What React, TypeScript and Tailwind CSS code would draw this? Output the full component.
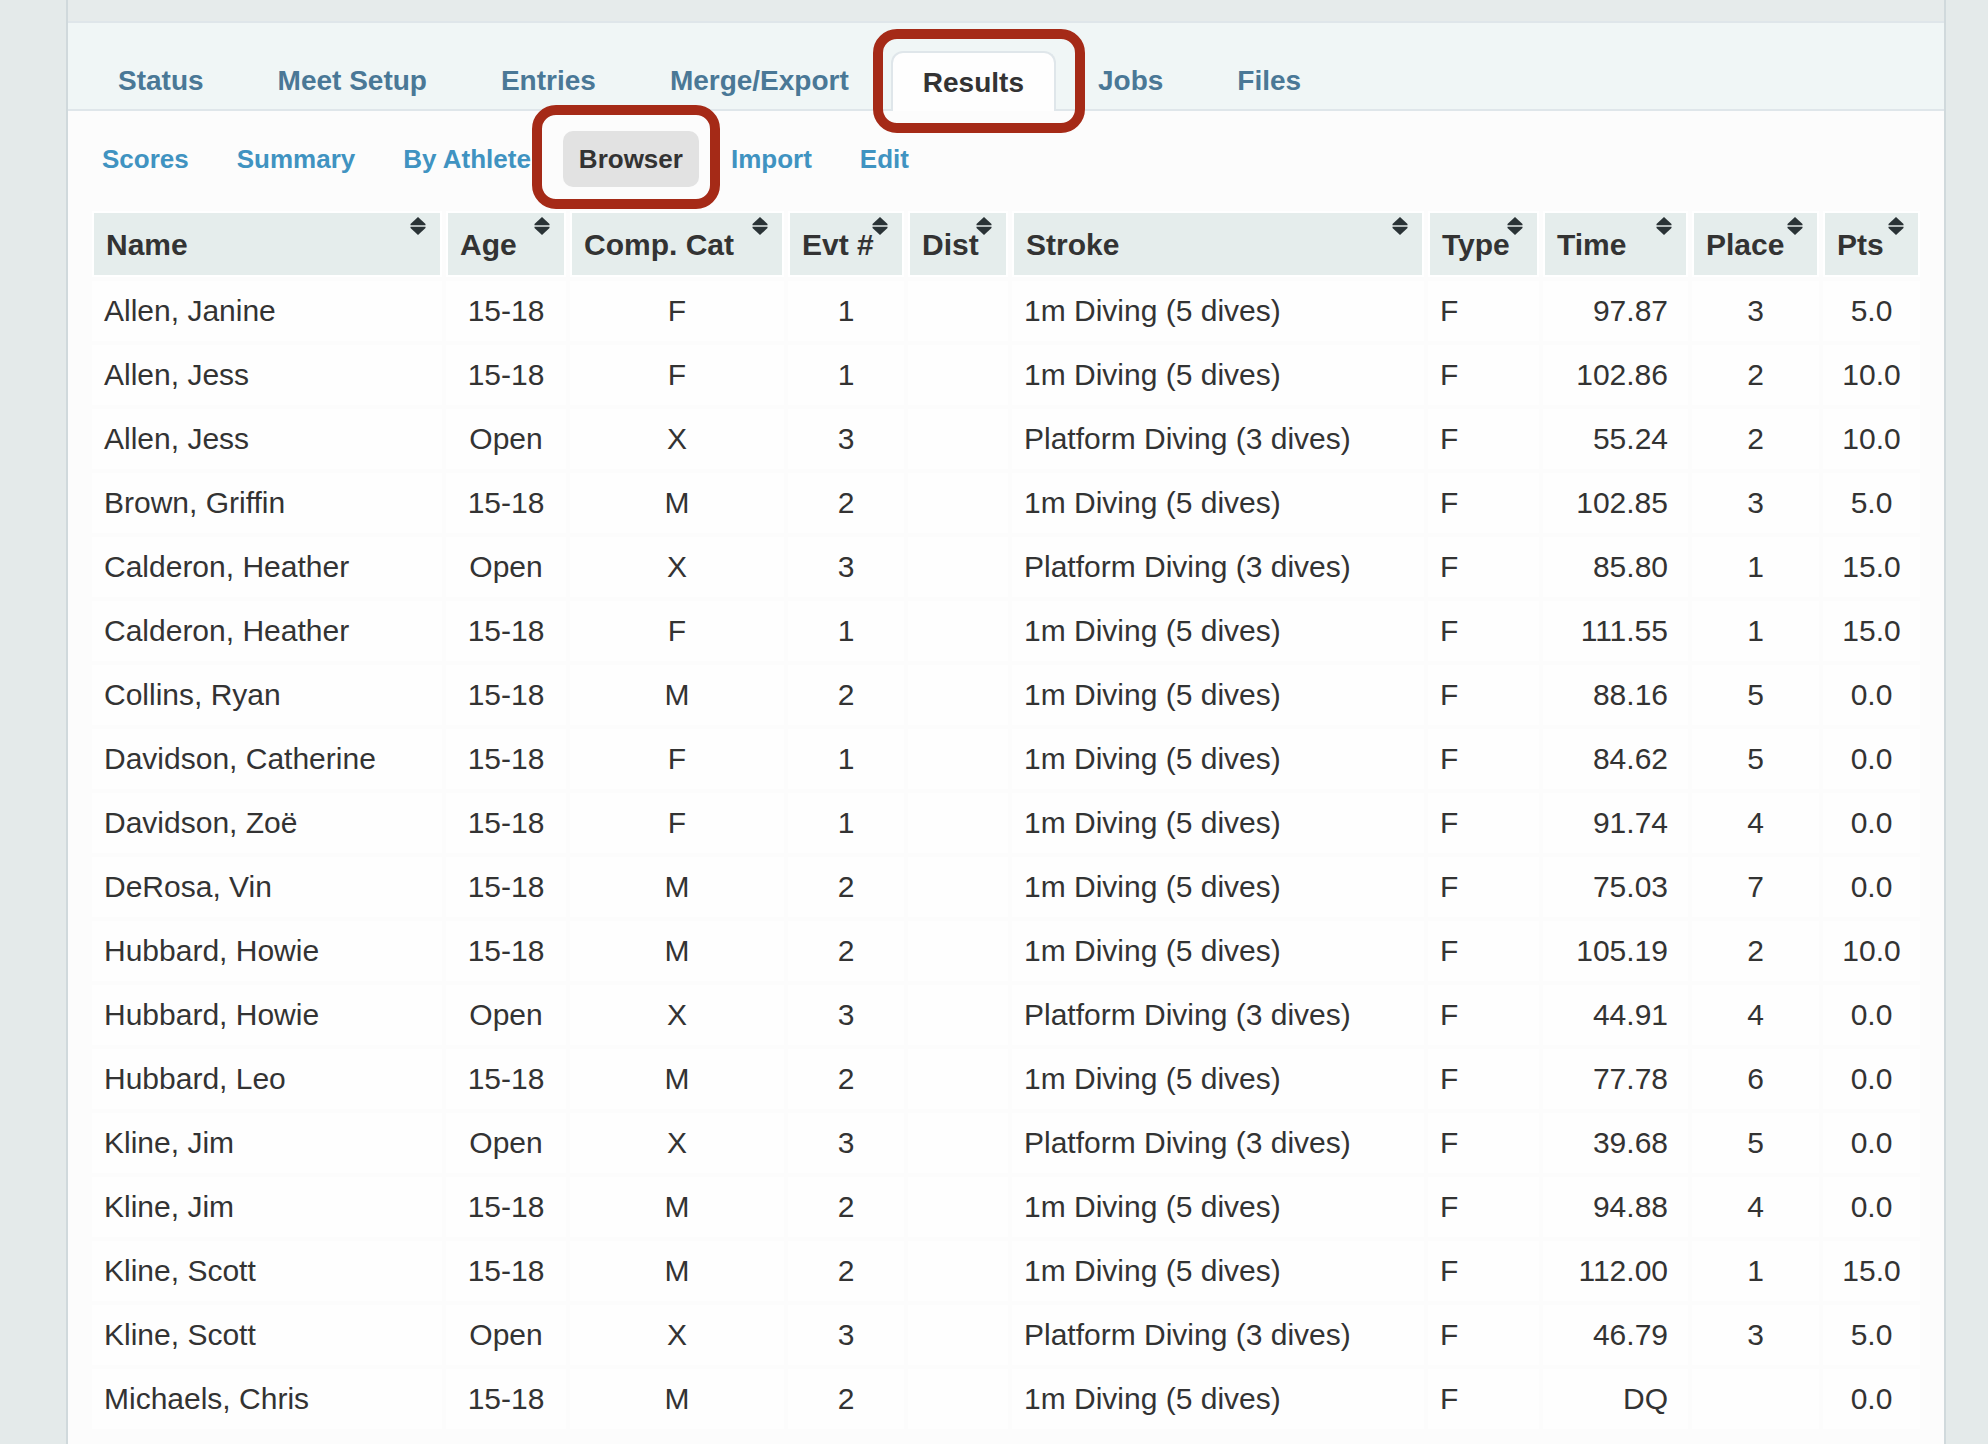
import React from 'react';

interface Column {
  label: string;
  width: string;
  cell: string;
}

const FONT = "font-['Liberation_Sans',Arial,sans-serif]";

const tabs = ['Status', 'Meet Setup', 'Entries', 'Merge/Export', 'Results', 'Jobs', 'Files'];
const subTabs = ['Scores', 'Summary', 'By Athlete', 'Browser', 'Import', 'Edit'];

const columns: Column[] = [
  { label: 'Name', width: 'w-[350px]', cell: 'px-3 text-left' },
  { label: 'Age', width: 'w-[120px]', cell: 'px-3 text-center' },
  { label: 'Comp. Cat', width: 'w-[214px]', cell: 'px-3 text-center' },
  { label: 'Evt #', width: 'w-[116px]', cell: 'px-3 text-center' },
  { label: 'Dist', width: 'w-[100px]', cell: 'px-3 text-center' },
  { label: 'Stroke', width: 'w-[412px]', cell: 'px-3 text-left' },
  { label: 'Type', width: 'w-[111px]', cell: 'px-3 text-left' },
  { label: 'Time', width: 'w-[145px]', cell: 'px-5 text-right' },
  { label: 'Place', width: 'w-[127px]', cell: 'px-3 text-center' },
  { label: 'Pts', width: 'w-[97px]', cell: 'px-3 text-center' },
];

const ONE_METER = '1m Diving (5 dives)';
const PLATFORM = 'Platform Diving (3 dives)';

// name, age, comp. cat, evt #, dist, stroke, type, time, place, pts
const rows: string[][] = [
  ['Allen, Janine', '15-18', 'F', '1', '', ONE_METER, 'F', '97.87', '3', '5.0'],
  ['Allen, Jess', '15-18', 'F', '1', '', ONE_METER, 'F', '102.86', '2', '10.0'],
  ['Allen, Jess', 'Open', 'X', '3', '', PLATFORM, 'F', '55.24', '2', '10.0'],
  ['Brown, Griffin', '15-18', 'M', '2', '', ONE_METER, 'F', '102.85', '3', '5.0'],
  ['Calderon, Heather', 'Open', 'X', '3', '', PLATFORM, 'F', '85.80', '1', '15.0'],
  ['Calderon, Heather', '15-18', 'F', '1', '', ONE_METER, 'F', '111.55', '1', '15.0'],
  ['Collins, Ryan', '15-18', 'M', '2', '', ONE_METER, 'F', '88.16', '5', '0.0'],
  ['Davidson, Catherine', '15-18', 'F', '1', '', ONE_METER, 'F', '84.62', '5', '0.0'],
  ['Davidson, Zoë', '15-18', 'F', '1', '', ONE_METER, 'F', '91.74', '4', '0.0'],
  ['DeRosa, Vin', '15-18', 'M', '2', '', ONE_METER, 'F', '75.03', '7', '0.0'],
  ['Hubbard, Howie', '15-18', 'M', '2', '', ONE_METER, 'F', '105.19', '2', '10.0'],
  ['Hubbard, Howie', 'Open', 'X', '3', '', PLATFORM, 'F', '44.91', '4', '0.0'],
  ['Hubbard, Leo', '15-18', 'M', '2', '', ONE_METER, 'F', '77.78', '6', '0.0'],
  ['Kline, Jim', 'Open', 'X', '3', '', PLATFORM, 'F', '39.68', '5', '0.0'],
  ['Kline, Jim', '15-18', 'M', '2', '', ONE_METER, 'F', '94.88', '4', '0.0'],
  ['Kline, Scott', '15-18', 'M', '2', '', ONE_METER, 'F', '112.00', '1', '15.0'],
  ['Kline, Scott', 'Open', 'X', '3', '', PLATFORM, 'F', '46.79', '3', '5.0'],
  ['Michaels, Chris', '15-18', 'M', '2', '', ONE_METER, 'F', 'DQ', '', '0.0'],
];

const SortIcon = () => (
  <svg viewBox="0 0 16 18" className="absolute top-1 right-3.5 w-4 h-[18px]" aria-hidden="true">
    <path d="M8 0 L15.5 7 V8 H0.5 V7 Z" fill="#2a3336" />
    <path d="M0.5 8 H15.5 V10 H0.5 Z" fill="#b3baba" />
    <path d="M0.5 10 H15.5 V11 L8 18 L0.5 11 Z" fill="#2a3336" />
  </svg>
);

// Red callout ring laid over the active item
const Callout = ({ className }: { className: string }) => (
  <span className={`absolute z-10 border-[10px] border-[#a52a17] rounded-3xl pointer-events-none ${className}`} />
);

const MainTabs = () => (
  <nav className="flex items-end gap-2.5 h-[88px] pl-[18px] bg-[#f0f6f6] border-b-2 border-[#dfe6ea]">
    {tabs.map((tab) =>
      tab === 'Results' ? (
        <a
          key={tab}
          href="#results"
          aria-current="page"
          className="relative h-[60px] -mb-0.5 px-[30px] pt-3 border-2 border-b-0 border-[#dfe6ea] rounded-t-xl bg-[#fefefe] text-[28px] leading-[36px] font-bold text-[#333]"
        >
          {tab}
          <Callout className="-top-6 -bottom-[22px] -left-5 -right-[31px]" />
        </a>
      ) : (
        <a key={tab} href="#" className="px-8 pb-2.5 text-[28px] leading-[36px] font-bold text-[#4a7896]">
          {tab}
        </a>
      )
    )}
  </nav>
);

const SubTabs = () => (
  <nav className="flex gap-4 px-[18px] py-5">
    {subTabs.map((tab) =>
      tab === 'Browser' ? (
        <a
          key={tab}
          href="#browser"
          aria-current="page"
          className="relative px-4 py-2.5 rounded-[10px] bg-[#e2e2e2] text-[26px] leading-[36px] font-bold text-[#333]"
        >
          {tab}
          <Callout className="-top-[26px] -bottom-[22px] -left-[31px] -right-[21px]" />
        </a>
      ) : (
        <a key={tab} href="#" className="px-4 py-2.5 text-[26px] leading-[36px] font-bold text-[#4093c1]">
          {tab}
        </a>
      )
    )}
  </nav>
);

const ResultsTable = () => (
  <div className="px-5">
    <table className="w-full table-fixed border-separate border-spacing-1 text-[30px] leading-[36px] text-[#333]">
      <colgroup>
        {columns.map((col) => (
          <col key={col.label} className={col.width} />
        ))}
      </colgroup>
      <thead>
        <tr>
          {columns.map((col) => (
            <th
              key={col.label}
              className="relative h-[66px] pl-3 pt-0.5 border-2 border-white bg-[#e5edec] text-left font-bold whitespace-nowrap"
            >
              {col.label}
              <SortIcon />
            </th>
          ))}
        </tr>
      </thead>
      <tbody>
        {rows.map((row, i) => (
          <tr key={i}>
            {row.map((value, j) => (
              <td key={j} className={`h-[60px] bg-[#fefefe] whitespace-nowrap ${columns[j].cell}`}>
                {value}
              </td>
            ))}
          </tr>
        ))}
      </tbody>
    </table>
  </div>
);

export default function App() {
  return (
    <div className={`min-h-screen pl-[66px] pr-[42px] bg-[#e4eaea] ${FONT}`}>
      <div className="min-h-screen border-x-2 border-[#d0d9dc] bg-[#fcfcfc]">
        <div className="h-[23px] bg-[#e6ebeb] border-b-2 border-[#dfe6ea]" />
        <MainTabs />
        <SubTabs />
        <ResultsTable />
      </div>
    </div>
  );
}
